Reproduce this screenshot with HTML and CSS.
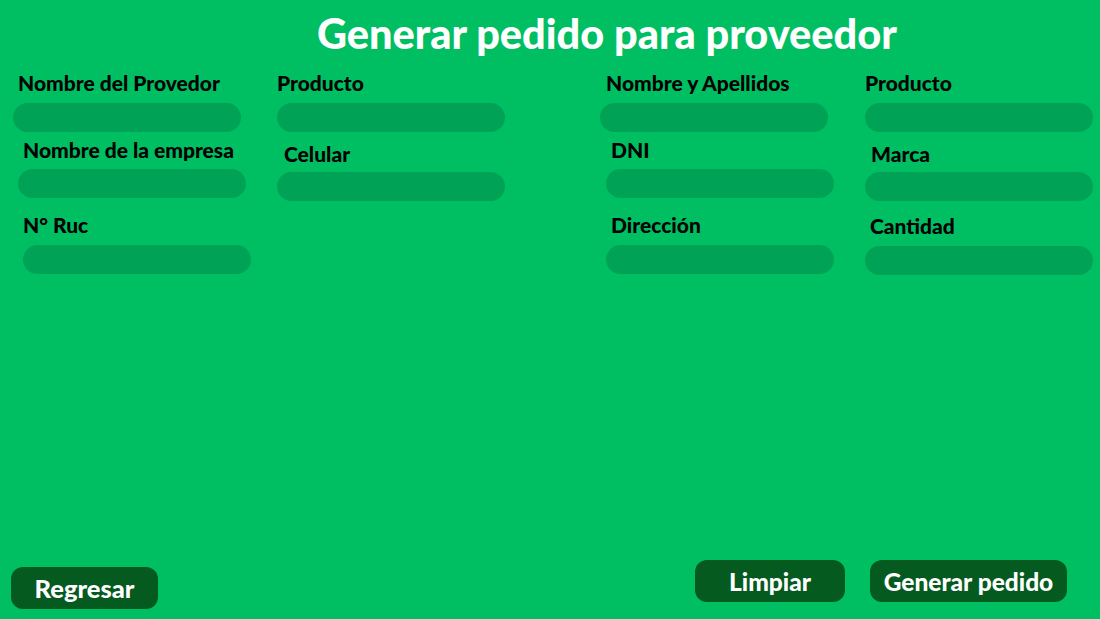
FILE: index.html
```html
<!DOCTYPE html>
<html lang="es">
<head>
<meta charset="utf-8">
<title>Generar pedido para proveedor</title>
<link rel="stylesheet" href="styles.css">
</head>
<body>
<div class="page">
  <h1 class="title">Generar pedido para proveedor</h1>
  <form class="form">
    <div class="col col-1">
      <div class="field f-a"><label class="lb-5">Nombre del Provedor</label><input type="text"></div>
      <div class="field f-b in-5"><label class="lb-5">Nombre de la empresa</label><input type="text"></div>
      <div class="field f-c in-10"><label>N° Ruc</label><input type="text"></div>
    </div>
    <div class="col col-2">
      <div class="field f-a"><label>Producto</label><input type="text"></div>
      <div class="field f-d"><label class="lb-7">Celular</label><input type="text"></div>
    </div>
    <div class="col col-3">
      <div class="field f-a"><label class="lb-6">Nombre y Apellidos</label><input type="text"></div>
      <div class="field f-b in-6"><label class="lb-5">DNI</label><input type="text"></div>
      <div class="field f-c in-6"><label class="lb-5">Dirección</label><input type="text"></div>
    </div>
    <div class="col col-4">
      <div class="field f-a"><label>Producto</label><input type="text"></div>
      <div class="field f-d"><label class="lb-6">Marca</label><input type="text"></div>
      <div class="field f-e"><label class="lb-5">Cantidad</label><input type="text"></div>
    </div>
  </form>
  <div class="actions">
    <button type="button" class="btn btn-back">Regresar</button>
    <div class="actions-right">
      <button type="button" class="btn btn-clear">Limpiar</button>
      <button type="button" class="btn btn-submit">Generar pedido</button>
    </div>
  </div>
</div>
</body>
</html>
```
FILE: styles.css
```css
* { box-sizing: border-box; }
html, body { margin: 0; padding: 0; }
body {
  background: #00bf63;
  font-family: Lato, "Open Sans", sans-serif;
  color: #000;
}
.page {
  width: 1100px;
  height: 619px;
  display: flex;
  flex-direction: column;
  overflow: hidden;
}
.title {
  margin: 10px 0 0 317px;
  font-size: 41.5px;
  line-height: 46px;
  font-weight: 900;
  color: #fff;
  white-space: nowrap;
}
.form {
  display: flex;
  margin-top: 16px;
  padding-left: 13px;
}
.col { display: flex; flex-direction: column; width: 228px; }
.col-2 { margin-left: 36px; }
.col-3 { margin-left: 95px; }
.col-4 { margin-left: 37px; }
.field { display: flex; flex-direction: column; }
.field label {
  font-size: 21px;
  font-weight: 900;
  line-height: 22px;
  height: 22px;
  white-space: nowrap;
  margin-left: 0;
}
.field input {
  width: 228px;
  height: 29px;
  border: none;
  border-radius: 15px;
  background: #00a355;
  outline: none;
  margin-top: 9px;
}
.f-b { margin-top: 7px; }
.f-b input { margin-top: 8px; }
.f-c { margin-top: 16px; }
.f-c input { margin-top: 9px; }
.f-d { margin-top: 11px; }
.f-d input { margin-top: 7px; }
.f-e { margin-top: 14px; }
.f-e input { margin-top: 9px; }
.in-5 { margin-left: 5px; }
.in-6 { margin-left: 6px; }
.in-10 { margin-left: 10px; }
.field label.lb-5 { margin-left: 5px; }
.field label.lb-6 { margin-left: 6px; }
.field label.lb-7 { margin-left: 7px; }
.actions {
  margin-top: auto;
  display: flex;
  align-items: flex-end;
  justify-content: space-between;
  padding: 0 33px 10px 11px;
}
.actions-right { display: flex; gap: 25px; margin-bottom: 7px; }
.btn {
  height: 42px;
  border: none;
  border-radius: 12px;
  background: #045a1f;
  color: #fff;
  font-family: Lato, "Open Sans", sans-serif;
  font-size: 24.5px;
  font-weight: 900;
  padding: 0;
}
.btn-back { width: 147px; font-size: 25.5px; }
.btn-clear { width: 150px; }
.btn-submit { width: 197px; }
```
